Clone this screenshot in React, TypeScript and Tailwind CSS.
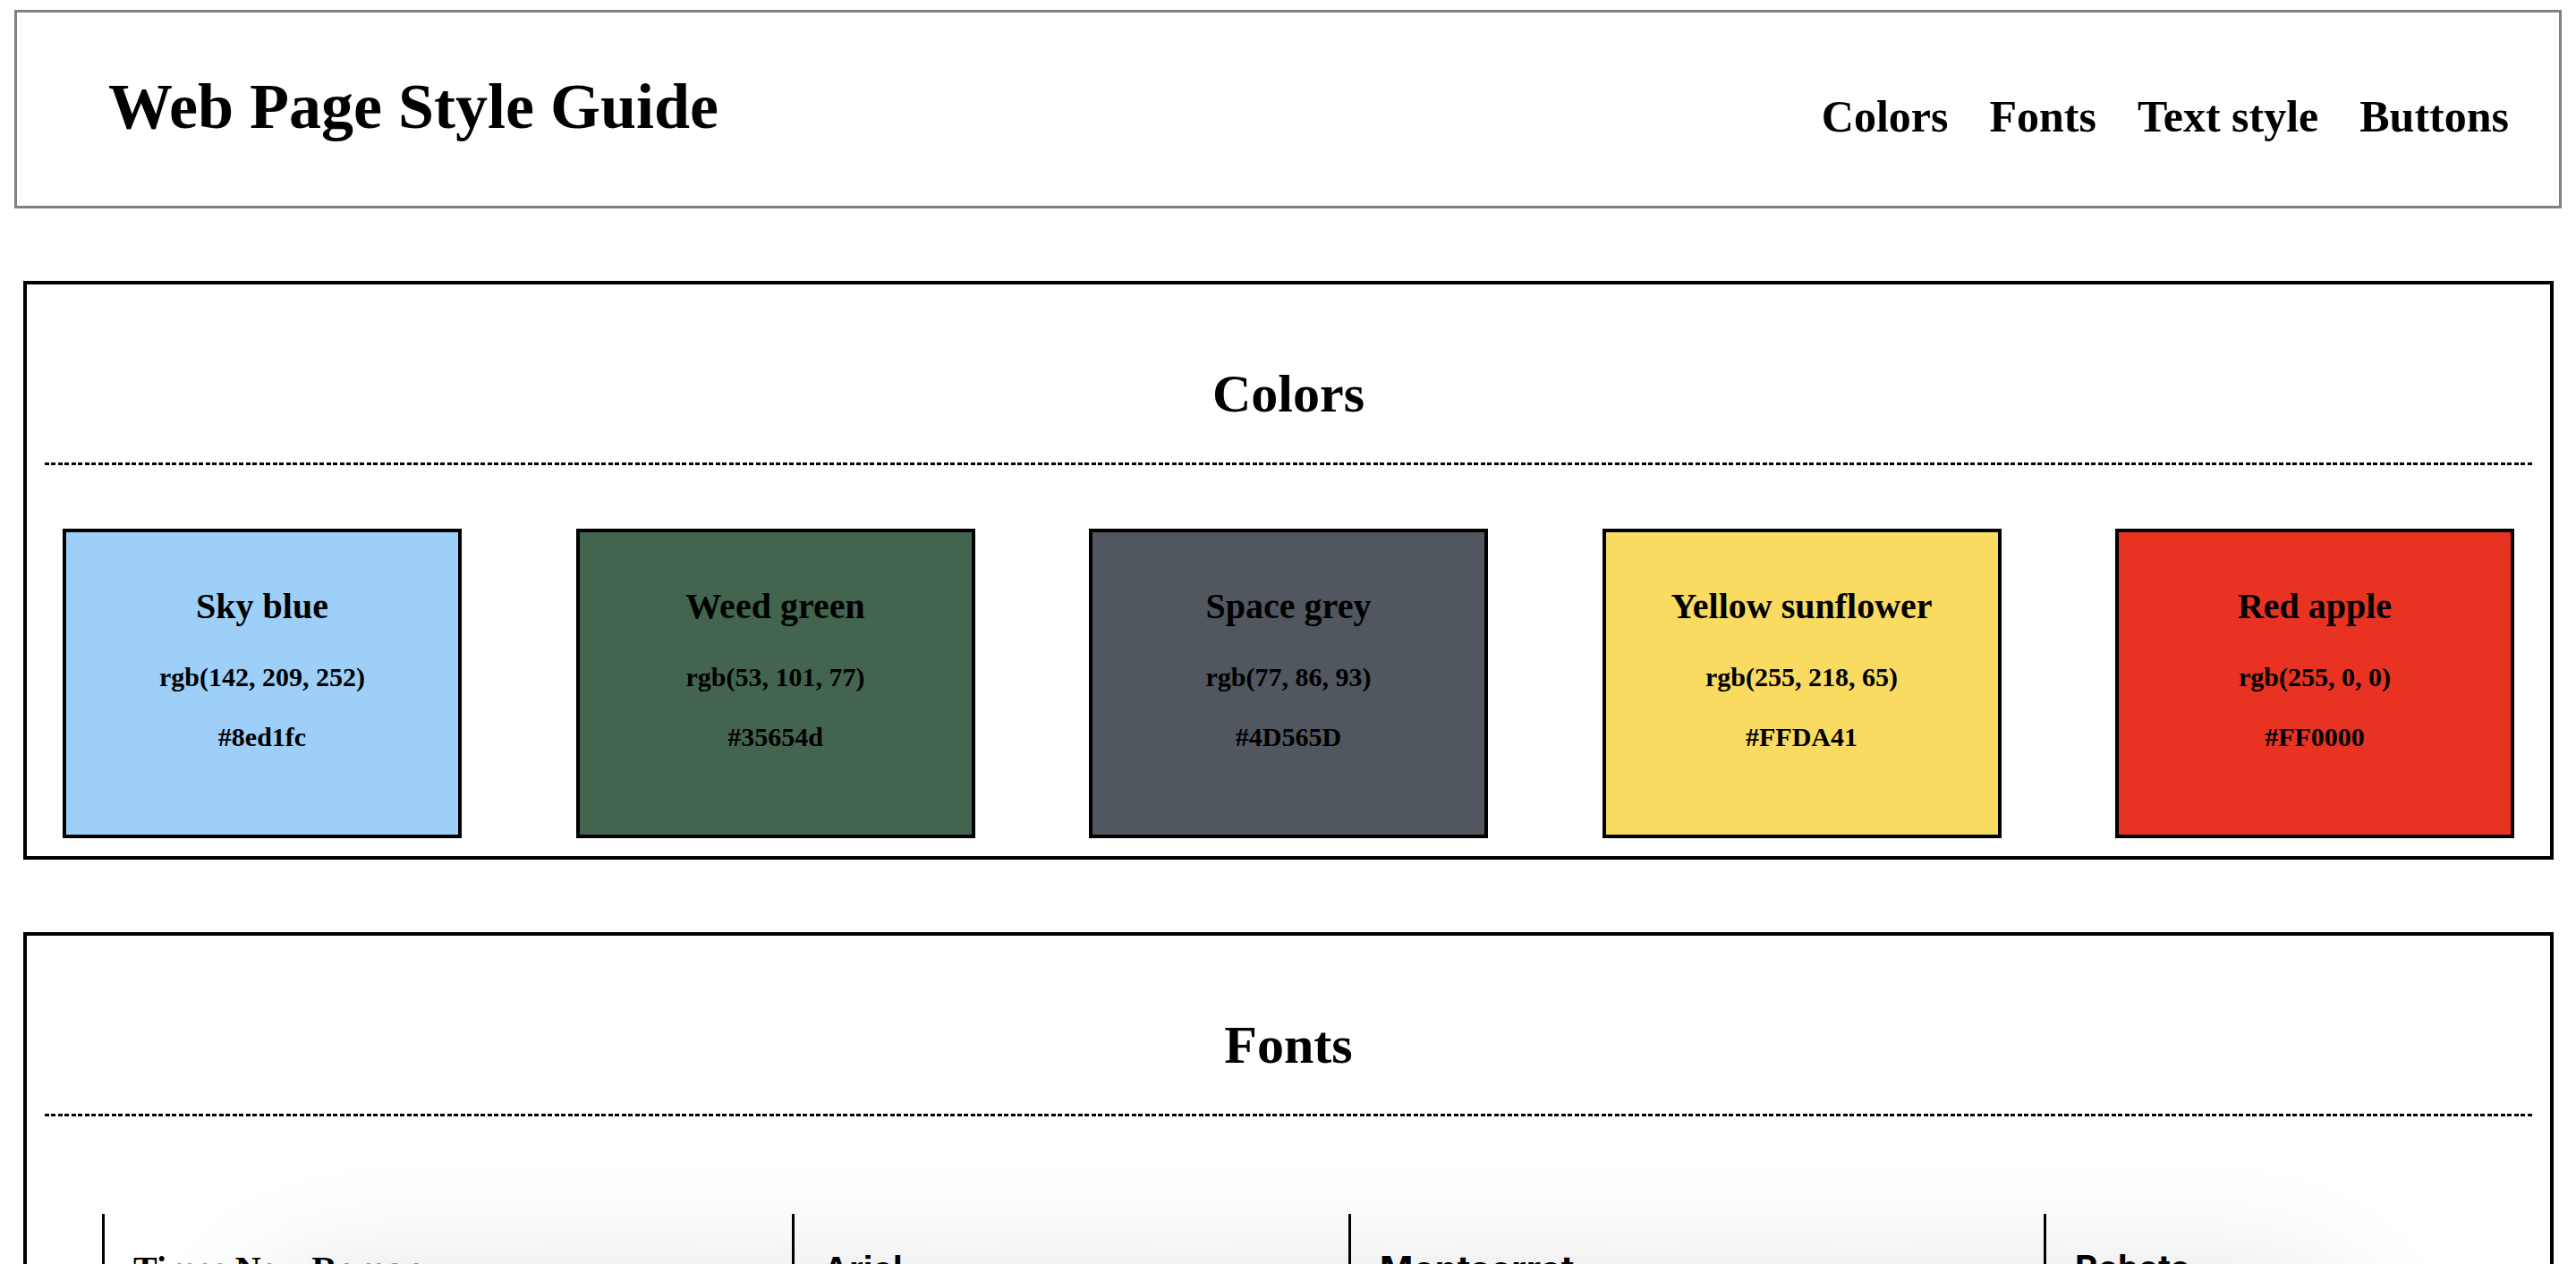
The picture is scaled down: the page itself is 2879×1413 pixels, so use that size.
import React from "react";

const colors = [
  { name: "Sky blue", rgb: "rgb(142, 209, 252)", hex: "#8ed1fc", bg: "bg-[#9dcff8]" },
  { name: "Weed green", rgb: "rgb(53, 101, 77)", hex: "#35654d", bg: "bg-[#436550]" },
  { name: "Space grey", rgb: "rgb(77, 86, 93)", hex: "#4D565D", bg: "bg-[#50575e]" },
  { name: "Yellow sunflower", rgb: "rgb(255, 218, 65)", hex: "#FFDA41", bg: "bg-[#f8db60]" },
  { name: "Red apple", rgb: "rgb(255, 0, 0)", hex: "#FF0000", bg: "bg-[#e83323]" },
];

const fonts = [
  { name: "Times New Roman", w: "w-[771px]", f: "font-['Liberation_Serif',serif]" },
  { name: "Arial", w: "w-[622px]", f: "font-['Liberation_Sans',sans-serif]" },
  { name: "Montserrat", w: "w-[777px]", f: "font-['Inter',sans-serif]" },
  { name: "Roboto", w: "w-[560px]", f: "font-['Roboto',sans-serif]" },
];

function Dashed() {
  return (
    <div className="mx-[20px] mt-[47px] h-[3px] bg-[repeating-linear-gradient(90deg,#000_0_5px,transparent_5px_7.5px)]" />
  );
}

function SectionTitle({ children }: { children: React.ReactNode }) {
  return <h2 className="pt-[92px] text-center text-[60px] leading-none font-bold">{children}</h2>;
}

export default function App() {
  return (
    <div className="relative min-h-screen bg-white pt-[11px] font-['Liberation_Serif',serif] font-bold text-black">
      <header className="mx-[16px] flex h-[222px] items-start justify-between border-[3px] border-[#808080] pl-[102px] pr-[56px]">
        <h1 className="mt-[69px] text-[72px] leading-none font-bold">Web Page Style Guide</h1>
        <nav className="mt-[91px] flex gap-[46px] text-[50px] leading-none">
          <span>Colors</span>
          <span>Fonts</span>
          <span>Text style</span>
          <span>Buttons</span>
        </nav>
      </header>

      <section className="mt-[81px] ml-[26px] mr-[25px] border-4 border-black pb-[20px]">
        <SectionTitle>Colors</SectionTitle>
        <Dashed />
        <div className="mt-[71px] flex justify-between pl-[40px] pr-[40px]">
          {colors.map((c) => (
            <div
              key={c.name}
              className={`flex h-[346px] w-[446px] flex-col items-center border-4 border-black ${c.bg}`}
            >
              <div className="mt-[63px] text-[40px] leading-none">{c.name}</div>
              <div className="mt-[44px] text-[30px] leading-none">{c.rgb}</div>
              <div className="mt-[37px] text-[30px] leading-none">{c.hex}</div>
            </div>
          ))}
        </div>
      </section>

      <section className="mt-[81px] ml-[26px] mr-[25px] border-4 border-black pb-[200px]">
        <SectionTitle>Fonts</SectionTitle>
        <Dashed />
        <div className="mt-[109px] flex pl-[84px]">
          {fonts.map((f) => (
            <div key={f.name} className={`${f.w} h-[300px] border-l-[3px] border-black pl-[32px] pt-[42px]`}>
              <div className={`${f.f} text-[40px] leading-none font-bold`}>{f.name}</div>
            </div>
          ))}
        </div>
      </section>

      <div className="pointer-events-none fixed left-[330px] right-[300px] top-[1490px] h-[200px] rounded-[60px] bg-[#e6e6e6] shadow-[0_0_140px_60px_rgba(0,0,0,0.13)]" />
    </div>
  );
}
